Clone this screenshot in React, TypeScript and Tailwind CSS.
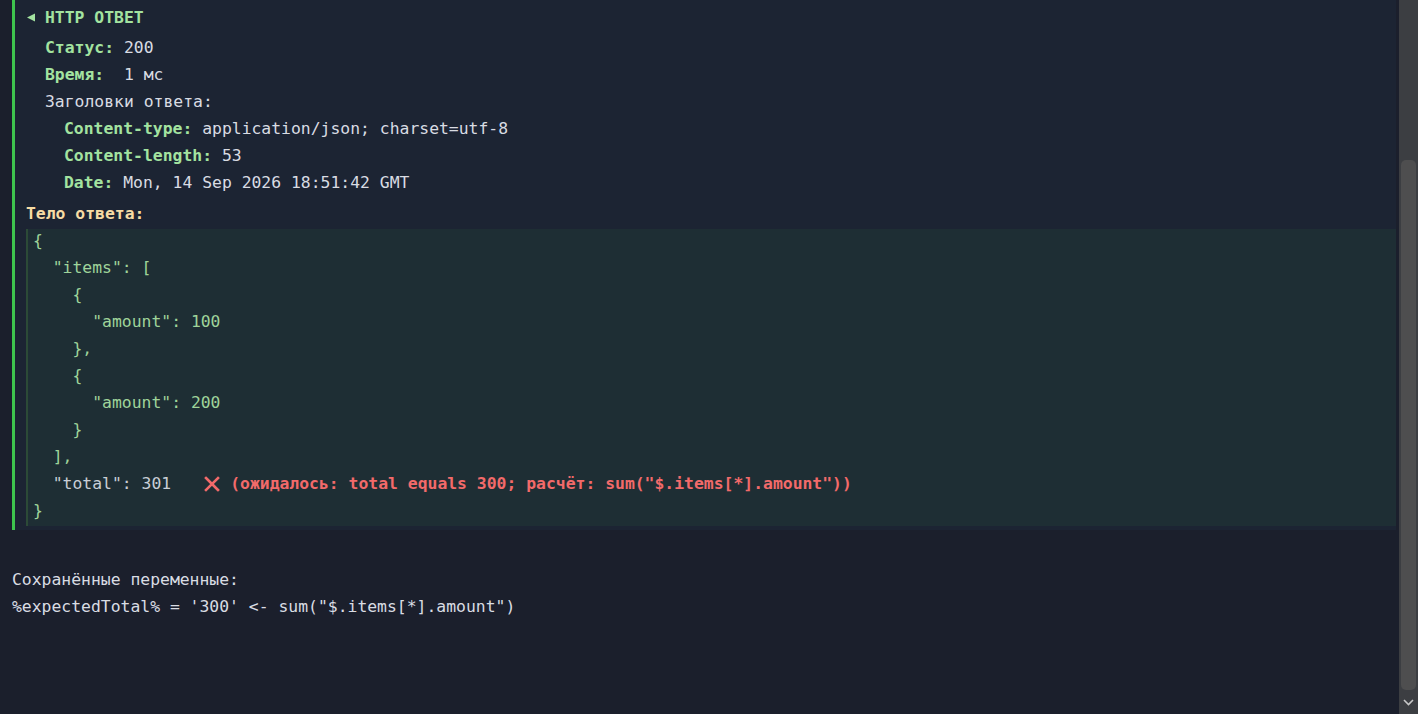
import React from "react";

const mono = { fontFamily: '"DejaVu Sans Mono", "Liberation Mono", monospace' };

function Label({ children }: { children: React.ReactNode }) {
  return <span className="font-bold text-[#a3e3a0]">{children}</span>;
}

export default function App() {
  const json: React.ReactNode[] = [
    "{",
    '  "items": [',
    "    {",
    '      "amount": 100',
    "    },",
    "    {",
    '      "amount": 200',
    "    }",
    "  ],",
  ];
  return (
    <div
      className="flex h-[714px] w-[1418px] overflow-hidden bg-[#1b1f2c] text-[16.4px] leading-[27px] text-[#d9dce3]"
      style={mono}
    >
      <div className="flex-1 pl-[12px] pr-[3px]">
        <div className="border-l-[3px] border-[#3ec44e] bg-[#1c2433] pt-[4px] pb-[4px] pl-[11px]">
          <div className="flex items-center font-bold text-[#a3e3a0]">
            <svg width="10" height="11" viewBox="0 0 10 11" className="mr-[9px]">
              <polygon points="9,1.5 9,9.5 1,5.5" fill="#a3e3a0" />
            </svg>
            <span>HTTP ОТВЕТ</span>
          </div>
          <div className="mt-[3px] pl-[19px] whitespace-pre">
            <div>
              <Label>Статус:</Label> 200
            </div>
            <div>
              <Label>Время:</Label>{"  "}1 мс
            </div>
            <div>Заголовки ответа:</div>
            <div className="pl-[19px]">
              <div>
                <Label>Content-type:</Label> application/json; charset=utf-8
              </div>
              <div>
                <Label>Content-length:</Label> 53
              </div>
              <div>
                <Label>Date:</Label> Mon, 14 Sep 2026 18:51:42 GMT
              </div>
            </div>
          </div>
          <div className="mt-[4px] font-bold text-[#f7dca4]">Тело ответа:</div>
          <div className="mt-[2px] border-l-2 border-[#2c4a37] bg-[#1e2e34] pl-[5px] leading-[27px] whitespace-pre text-[#9fd49a]">
            <div className="-translate-y-[2px]">
              {json.map((l, i) => (
                <div key={i}>{l}</div>
              ))}
              <div className="flex items-center">
                <span className="text-[#c9ced6]">{'  "total": 301'}</span>
                <svg width="16" height="16" viewBox="0 0 16 16" className="ml-[33px] mr-[10px]">
                  <path d="M2 2 L14 14 M14 2 L2 14" stroke="#f26a6a" strokeWidth="2.6" strokeLinecap="square" />
                </svg>
                <span className="font-bold text-[#f26a6a]">
                  (ожидалось: total equals 300; расчёт: sum("$.items[*].amount"))
                </span>
              </div>
              <div>{"}"}</div>
            </div>
          </div>
        </div>
        <div className="mt-[36px] whitespace-pre text-[#d9dce3]">
          <div>Сохранённые переменные:</div>
          <div>%expectedTotal% = '300' &lt;- sum("$.items[*].amount")</div>
        </div>
      </div>
      <div className="flex w-[19px] flex-col bg-[#3c3e42]">
        <div className="h-[160px]" />
        <div className="mx-[2px] h-[530px] rounded-[5px] bg-[#4e4e4f]" />
        <div className="flex flex-1 items-center justify-center">
          <svg width="11" height="7" viewBox="0 0 11 7">
            <polyline points="1,1 5.5,5.5 10,1" fill="none" stroke="#c8c8c8" strokeWidth="1.6" />
          </svg>
        </div>
      </div>
    </div>
  );
}
